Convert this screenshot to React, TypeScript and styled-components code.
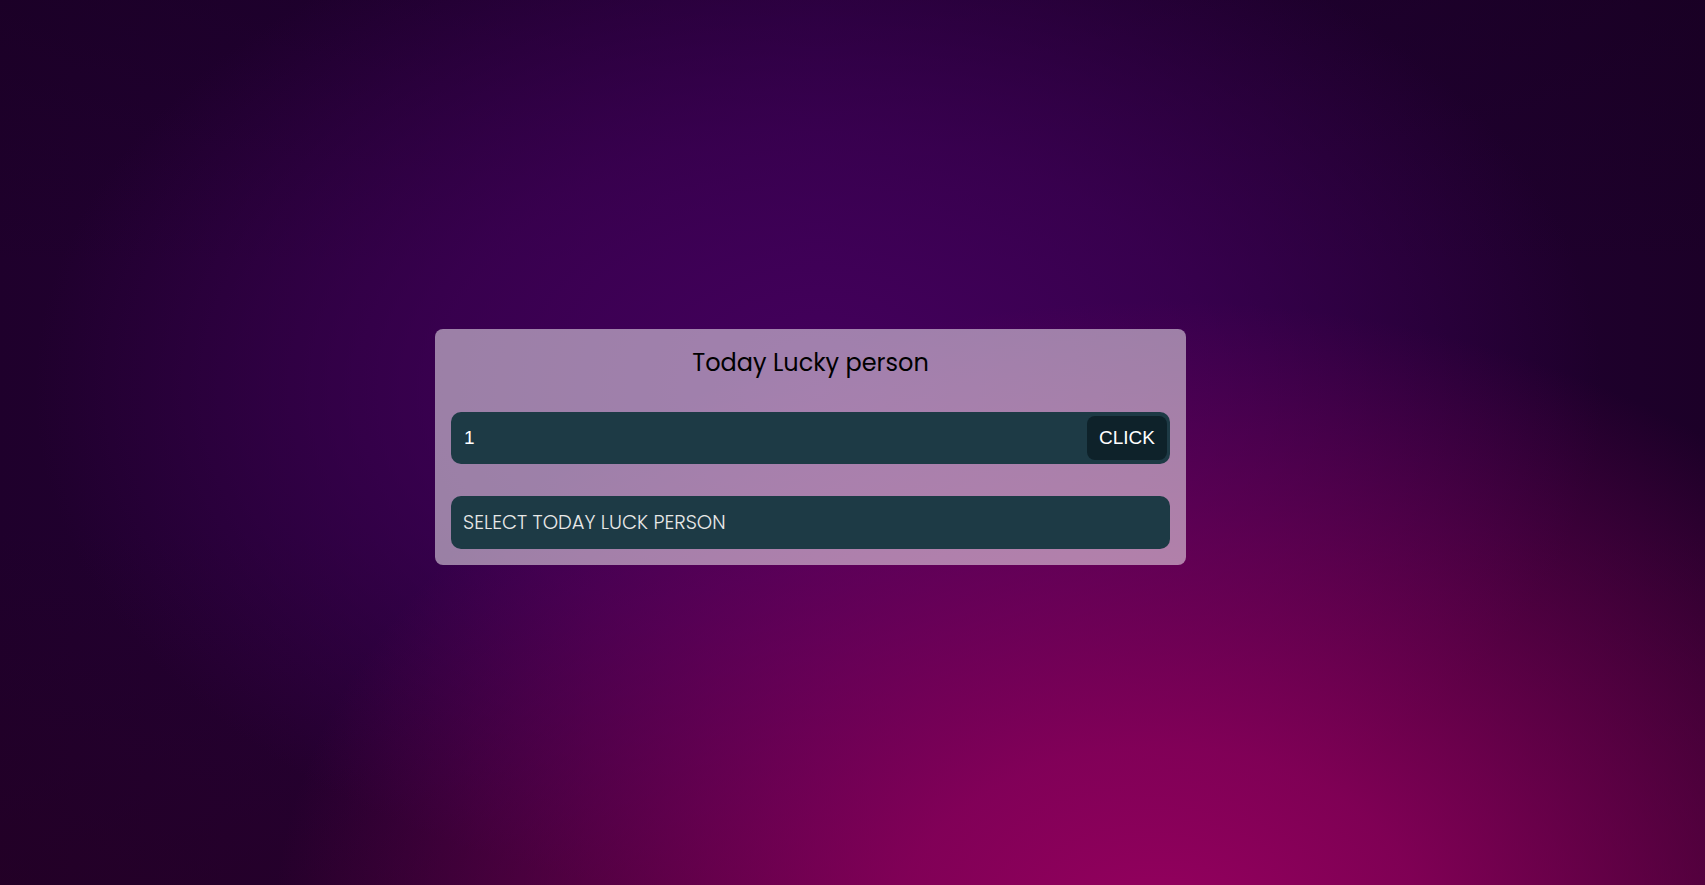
import React, { useState } from "react"
import styled, { createGlobalStyle } from "styled-components"

const GlobalStyle = createGlobalStyle`
  * {
    box-sizing: border-box;
  }

  html,
  body {
    margin: 0;
    padding: 0;
    height: 100%;
  }

  body {
    font-family: "Poppins", "Inter", "Noto Sans", sans-serif;
    background-color: #1e0028;
  }
`

const Page = styled.main`
  min-height: 100vh;
  display: flex;
  align-items: center;
  justify-content: center;
  padding: 9px 84px 0 0;
  background:
    radial-gradient(ellipse 52% 72% at 68% 106%, #96005f 0%, rgba(150, 0, 95, 0.8) 30%, rgba(150, 0, 95, 0) 100%),
    radial-gradient(ellipse 46% 58% at 48% 44%, #44005c 0%, rgba(68, 0, 92, 0.6) 50%, rgba(68, 0, 92, 0) 100%),
    linear-gradient(to bottom, rgba(20, 0, 30, 0.35) 0%, rgba(0, 0, 0, 0) 30%, rgba(0, 0, 0, 0) 60%, rgba(40, 0, 30, 0.4) 100%),
    linear-gradient(to right, #1f002c 0%, #2a0042 48%, #1c0028 100%);
`

const Card = styled.section`
  width: 751px;
  padding: 16px;
  border-radius: 8px;
  background-color: rgba(255, 255, 255, 0.5);
  display: flex;
  flex-direction: column;
`

const Title = styled.h1`
  margin: 0 0 31px;
  font-size: 24px;
  line-height: 36px;
  font-weight: 400;
  text-align: center;
  color: #000;
`

const InputRow = styled.div`
  display: flex;
  align-items: center;
  height: 52px;
  padding: 4px 3px 4px 0;
  margin-bottom: 32px;
  border-radius: 10px;
  background-color: #1d3a45;
`

const NumberInput = styled.input`
  flex: 1;
  min-width: 0;
  height: 100%;
  padding: 0 13px;
  border: none;
  outline: none;
  background: transparent;
  color: #fff;
  font-family: "Liberation Sans", Arial, sans-serif;
  font-size: 19px;
`

const ClickButton = styled.button`
  height: 44px;
  padding: 0 12px;
  border: none;
  border-radius: 8px;
  background-color: #0e222a;
  color: #fff;
  font-family: "Liberation Sans", Arial, sans-serif;
  font-size: 19px;
  cursor: pointer;
`

const ResultBox = styled.div`
  display: flex;
  align-items: center;
  height: 53px;
  padding: 0 12px;
  border-radius: 10px;
  background-color: #1d3a45;
  color: #e8e8e8;
  font-size: 19.5px;
  font-weight: 300;
  text-transform: uppercase;
`

const App: React.FC = () => {
  const [count, setCount] = useState("1")
  const [result, setResult] = useState("Select today luck person")

  const pick = () => {
    const n = parseInt(count, 10)
    if (!n || n < 1) return
    setResult(`Lucky person: ${Math.floor(Math.random() * n) + 1}`)
  }

  return (
    <>
      <GlobalStyle />
      <Page>
        <Card>
          <Title>Today Lucky person</Title>
          <InputRow>
            <NumberInput
              type="text"
              value={count}
              onChange={e => setCount(e.target.value)}
            />
            <ClickButton onClick={pick}>CLICK</ClickButton>
          </InputRow>
          <ResultBox>{result}</ResultBox>
        </Card>
      </Page>
    </>
  )
}

export default App
